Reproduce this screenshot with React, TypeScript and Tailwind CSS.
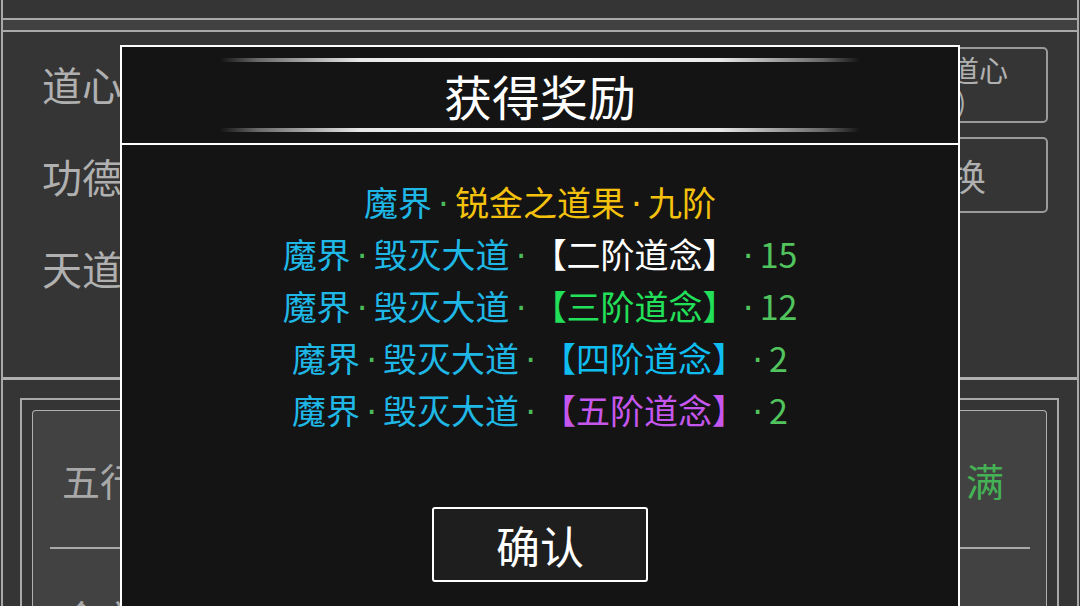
import React from "react";

const FONT = "font-['Noto_Sans_CJK_SC','Noto_Sans',sans-serif]";

const rewards = [
  { tag: "【二阶道念】", tagClass: "text-white", count: 15 },
  { tag: "【三阶道念】", tagClass: "text-[#22e05a]", count: 12 },
  { tag: "【四阶道念】", tagClass: "text-[#10bdf0]", count: 2 },
  { tag: "【五阶道念】", tagClass: "text-[#c557ee]", count: 2 },
];

// the CJK font draws "·" full width, so the dot uses a latin face to stay centred
function Dot({ className }: { className: string }) {
  return (
    <span className={`inline-block w-[23px] text-center leading-none font-['DejaVu_Sans',sans-serif] ${className}`}>·</span>
  );
}

function GlowLine() {
  return (
    <div className="h-[4px] w-[640px] rounded-full bg-[linear-gradient(90deg,transparent_0%,#6a6a6a_6%,#e8e8e8_22%,#ffffff_50%,#e8e8e8_78%,#6a6a6a_94%,transparent_100%)]" />
  );
}

function RewardModal() {
  return (
    <div className="absolute left-[120px] top-[45px] w-[840px] h-[600px] border-2 border-white bg-[#141414] flex flex-col">
      {/* header */}
      <div className="h-[98px] border-b-2 border-white flex flex-col items-center pt-[11px]">
        <GlowLine />
        <div className="h-[66px] leading-[66px] text-[48px] text-white">获得奖励</div>
        <GlowLine />
      </div>

      {/* reward list */}
      <div className="flex flex-col items-center pt-[31px] text-[34px] leading-[52px]">
        <div className="h-[52px] whitespace-nowrap">
          <span className="text-[#1fb8e6]">魔界</span>
          <Dot className="text-[#4cbb5a]" />
          <span className="text-[#f4c20d]">锐金之道果</span>
          <Dot className="text-[#f4c20d]" />
          <span className="text-[#f4c20d]">九阶</span>
        </div>
        {rewards.map((r) => (
          <div key={r.tag} className="h-[52px] whitespace-nowrap">
            <span className="text-[#1fb8e6]">魔界</span>
            <Dot className="text-[#4cbb5a]" />
            <span className="text-[#1fb8e6]">毁灭大道</span>
            <Dot className="text-[#4cbb5a]" />
            <span className={r.tagClass}>{r.tag}</span>
            <Dot className="text-[#52c45e]" />
            <span className="text-[#52c45e]">{r.count}</span>
          </div>
        ))}
        <button className="mt-[71px] w-[216px] h-[75px] rounded-[3px] border-2 border-white bg-[#1e1e1e] text-white text-[44px] leading-none">
          确认
        </button>
      </div>
    </div>
  );
}

export default function App() {
  return (
    <div className={`relative w-[1080px] h-[606px] overflow-hidden bg-[#353535] ${FONT}`}>
      <div className="ml-px w-[1078px] h-full border-x-2 border-[#a9a9a9] flex flex-col">
        {/* top strip */}
        <div className="h-[18px] shrink-0" />
        <div className="h-[14px] shrink-0 bg-[#414141] border-y-2 border-[#a9a9a9]" />

        {/* upper panel */}
        <div className="h-[348px] shrink-0 border-b-[3px] border-[#b0b0b0] flex justify-between">
          <div className="pl-[39px] pt-[28px] flex flex-col gap-[44px] text-[40px] leading-[48px] text-[#b0b0b0]">
            <div>道心：86</div>
            <div>功德：1200</div>
            <div>天道：3</div>
          </div>
          <div className="pr-[29px] pt-[15px] flex flex-col gap-[14px]">
            <div className="w-[196px] h-[76px] rounded-[5px] border-2 border-[#9a9a9a] flex flex-col items-center justify-center text-[#b0b0b0] leading-[32px]">
              <span className="text-[29px]">重置道心</span>
              <span className="text-[26px]">(0)</span>
            </div>
            <div className="w-[196px] h-[76px] rounded-[5px] border-2 border-[#9a9a9a] flex items-center justify-center text-[#b0b0b0] text-[36px]">
              兑换
            </div>
          </div>
        </div>

        {/* lower panel */}
        <div className="pt-[18px] pl-[17px] pr-[18px] flex-1">
          <div className="h-full border-2 border-b-0 border-[#a9a9a9] px-[10px] pt-[10px]">
            <div className="h-full rounded-t-[4px] border-[1.5px] border-b-0 border-[#b0b0b0] bg-[#424242] pt-[45px]">
              <div className="flex justify-between pl-[29px] pr-[42px] text-[38px] leading-[48px]">
                <span className="text-[#a8a8a8]">五行之道</span>
                <span className="text-[#45b155]">满</span>
              </div>
              <div className="mt-[43px] ml-[17px] mr-[16px] h-[2px] bg-[#a9a9a9]" />
              <div className="mt-[44px] pl-[29px] text-[38px] leading-[48px] text-[#a8a8a8]">金之道果</div>
            </div>
          </div>
        </div>
      </div>

      <RewardModal />
    </div>
  );
}
